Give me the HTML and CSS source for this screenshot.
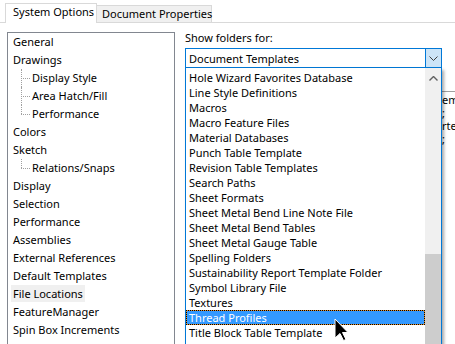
FILE: index.html
```html
<!DOCTYPE html>
<html lang="en">
<head>
    <meta charset="UTF-8">
    <meta name="viewport" content="width=device-width, initial-scale=1.0">
    <title>System Options - File Locations</title>
    <link rel="stylesheet" href="styles.css">
</head>
<body>
    <!-- Tab strip -->
    <div class="tabs">
        <div class="tab active">System Options</div>
        <div class="tab">Document Properties</div>
    </div>

    <div class="page">
        <!-- Options tree -->
        <ul class="tree">
            <li>General</li>
            <li>Drawings</li>
            <li class="child">Display Style</li>
            <li class="child">Area Hatch/Fill</li>
            <li class="child last">Performance</li>
            <li>Colors</li>
            <li>Sketch</li>
            <li class="child last">Relations/Snaps</li>
            <li>Display</li>
            <li>Selection</li>
            <li>Performance</li>
            <li>Assemblies</li>
            <li>External References</li>
            <li>Default Templates</li>
            <li><span class="current">File Locations</span></li>
            <li>FeatureManager</li>
            <li>Spin Box Increments</li>
            <li>View</li>
        </ul>

        <!-- File locations panel -->
        <div class="folders">
            <label class="field-label">Show folders for:</label>
            <div class="combo-wrap">
                <div class="combo">
                    <span class="combo-text">Document Templates</span>
                    <span class="combo-btn">
                        <svg width="9" height="5" viewBox="0 0 9 5"><path d="M0.5 0.5 L4.5 4.5 L8.5 0.5" fill="none" stroke="#404040" stroke-width="1"/></svg>
                    </span>
                </div>

                <!-- Open drop-down list -->
                <div class="popup">
                    <ul class="options">
                        <li>Hole Wizard Favorites Database</li>
                        <li>Line Style Definitions</li>
                        <li>Macros</li>
                        <li>Macro Feature Files</li>
                        <li>Material Databases</li>
                        <li>Punch Table Template</li>
                        <li>Revision Table Templates</li>
                        <li>Search Paths</li>
                        <li>Sheet Formats</li>
                        <li>Sheet Metal Bend Line Note File</li>
                        <li>Sheet Metal Bend Tables</li>
                        <li>Sheet Metal Gauge Table</li>
                        <li>Spelling Folders</li>
                        <li>Sustainability Report Template Folder</li>
                        <li>Symbol Library File</li>
                        <li>Textures</li>
                        <li class="selected">Thread Profiles</li>
                        <li>Title Block Table Template</li>
                        <li>Weld Table Template</li>
                    </ul>
                    <div class="scrollbar">
                        <span class="scroll-up">
                            <svg width="9" height="5" viewBox="0 0 9 5"><path d="M0.5 4.5 L4.5 0.5 L8.5 4.5" fill="none" stroke="#606060" stroke-width="1.4"/></svg>
                        </span>
                        <span class="thumb"></span>
                    </div>
                </div>
            </div>

            <!-- Folder list behind the drop-down -->
            <div class="paths">
                <div class="path">em</div>
                <div class="path">;</div>
                <div class="path">rte</div>
                <div class="path">;</div>
            </div>
        </div>
    </div>

    <!-- Mouse pointer -->
    <svg class="cursor" width="16" height="25" viewBox="0 0 16 25">
        <path d="M1 1 L1 20 L6 15.5 L9.5 22.5 L12 21.5 L8.5 14.5 L14 14.5 Z" fill="#000" stroke="#fff" stroke-width="1"/>
    </svg>
</body>
</html>
```

FILE: styles.css
```css
body {
    font-family: "Noto Sans", "Open Sans", sans-serif;
    font-size: 11px;
    color: #000;
    background: #fff;
    margin: 0;
    height: 344px;
    overflow: hidden;
    position: relative;
}
.tabs {
    display: flex;
    align-items: flex-end;
    height: 22px;
    padding-left: 5px;
    border-bottom: 1px solid #d9d9d9;
}
.tab {
    box-sizing: border-box;
    height: 17px;
    line-height: 16px;
    padding-left: 5px;
    width: 115px;
    background: #f0f0f0;
    border: 1px solid #d9d9d9;
    border-left: 0;
    border-bottom: 0;
    white-space: nowrap;
}
.tab.active {
    height: 20px;
    width: 92px;
    padding-left: 7px;
    margin-bottom: -1px;
    background: #fff;
    border-left: 1px solid #d9d9d9;
}
.page {
    display: flex;
    align-items: flex-start;
    padding: 9px 0 0 7px;
}
.tree {
    list-style: none;
    margin: 0;
    padding: 0;
    width: 168px;
    height: 340px;
    box-sizing: border-box;
    border: 1px solid #828790;
    flex-shrink: 0;
}
.tree li {
    position: relative;
    height: 18px;
    line-height: 18px;
    padding-left: 5px;
    white-space: nowrap;
}
.tree li.child {
    padding-left: 24px;
}
.tree li.child::before {
    content: "";
    position: absolute;
    left: 13px;
    top: 0;
    bottom: 0;
    border-left: 1px dotted #a0a0a0;
}
.tree li.child.last::before {
    bottom: 9px;
}
.tree li.child::after {
    content: "";
    position: absolute;
    left: 13px;
    top: 9px;
    width: 9px;
    border-top: 1px dotted #a0a0a0;
}
.current {
    display: inline-block;
    line-height: 17px;
    padding: 0 2px;
    margin-left: -2px;
    background: #f0f0f0;
}
.folders {
    margin-left: 10px;
    width: 270px;
    flex-shrink: 0;
}
.field-label {
    display: block;
    line-height: 14px;
    margin: -1px 0 3px;
}
.combo-wrap {
    position: relative;
    width: 257px;
}
.combo {
    display: flex;
    align-items: center;
    box-sizing: border-box;
    height: 20px;
    border: 1px solid #0078d7;
}
.combo-text {
    flex: 1;
    padding-left: 3px;
}
.combo-btn {
    align-self: stretch;
    width: 15px;
    background: #cce4f7;
    border-left: 1px solid #0078d7;
    display: flex;
    align-items: center;
    justify-content: center;
}
.popup {
    position: absolute;
    top: 100%;
    left: 0;
    width: 257px;
    height: 290px;
    box-sizing: border-box;
    display: flex;
    background: #fff;
    border: 1px solid #0078d7;
    border-top: 0;
    box-shadow: 2px 2px 3px rgba(0, 0, 0, 0.35);
    z-index: 2;
}
.options {
    list-style: none;
    margin: 0;
    padding: 2px 0 0;
    flex: 1;
}
.options li {
    height: 15px;
    line-height: 15px;
    padding-left: 3px;
    white-space: nowrap;
}
.options li.selected {
    box-sizing: border-box;
    line-height: 13px;
    padding-left: 2px;
    color: #fff;
    border: 1px dotted #000;
    background: linear-gradient(#3399ff, #3399ff) padding-box, #e8902a border-box;
}
.scrollbar {
    width: 16px;
    background: #f0f0f0;
    display: flex;
    flex-direction: column;
}
.scroll-up {
    height: 20px;
    display: flex;
    align-items: center;
    justify-content: center;
}
.thumb {
    flex: 1;
    margin-top: 166px;
    background: #cdcdcd;
}
.paths {
    margin-top: 23px;
    border-top: 1px solid #a0a0a0;
    padding-top: 1px;
}
.path {
    line-height: 13px;
    padding-left: 257px;
    white-space: nowrap;
}
.cursor {
    position: absolute;
    left: 334px;
    top: 318px;
    z-index: 3;
}
```
